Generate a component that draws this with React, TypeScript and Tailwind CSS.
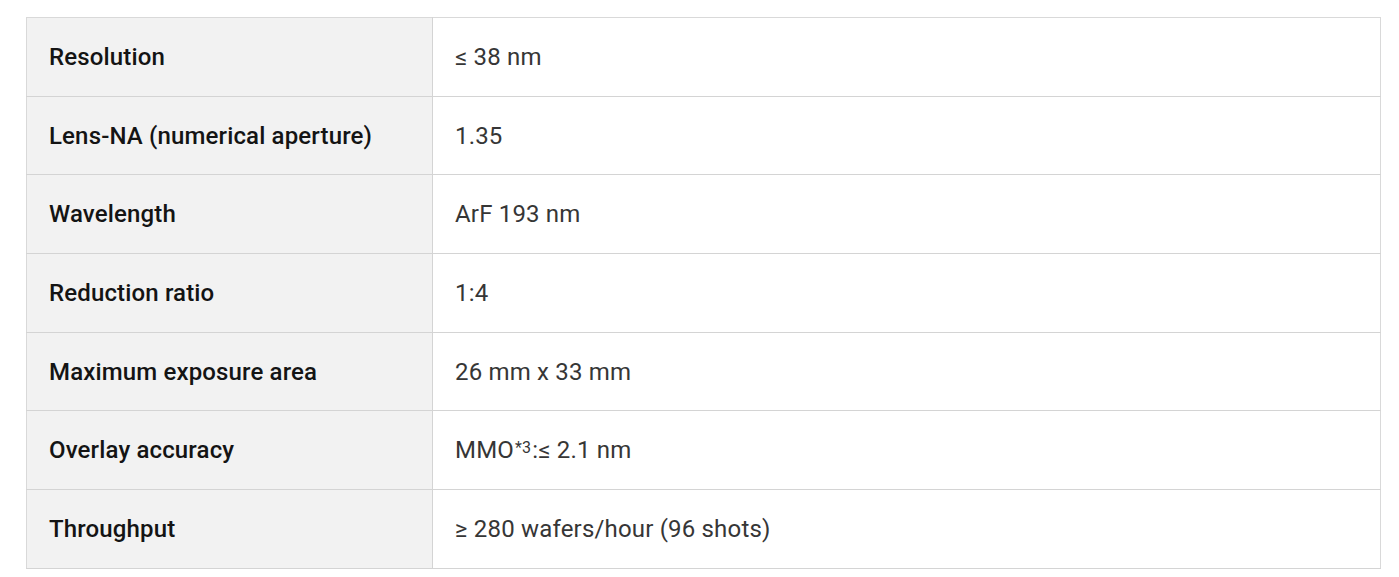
import React from "react";

const rows: { label: string; value: React.ReactNode }[] = [
  { label: "Resolution", value: "≤ 38 nm" },
  { label: "Lens-NA (numerical aperture)", value: "1.35" },
  { label: "Wavelength", value: "ArF 193 nm" },
  { label: "Reduction ratio", value: "1:4" },
  { label: "Maximum exposure area", value: "26 mm x 33 mm" },
  {
    label: "Overlay accuracy",
    value: (
      <>
        MMO<sup className="text-[16px] relative -top-[5px] ml-[1px] mr-[1px]">*3</sup>:≤ 2.1 nm
      </>
    ),
  },
  { label: "Throughput", value: "≥ 280 wafers/hour (96 shots)" },
];

export default function App() {
  return (
    <div className="w-[1399px] h-[577px] bg-white pt-[17px] pl-[26px]" style={{ fontFamily: "Roboto, 'Noto Sans', sans-serif" }}>
      <table className="border-collapse w-[1355px] border border-[#d9d9d9]">
        <tbody>
          {rows.map((r) => (
            <tr key={r.label} className="h-[78.7px] border-b border-[#d4d4d4]">
              <td className="w-[406px] bg-[#f2f2f2] border-r border-[#d4d4d4] pl-[22px] text-[24px] font-medium text-[#141414] tracking-[0.15px]">
                {r.label}
              </td>
              <td className="pl-[22px] text-[24px] text-[#363636] tracking-[0.18px]">{r.value}</td>
            </tr>
          ))}
        </tbody>
      </table>
    </div>
  );
}
